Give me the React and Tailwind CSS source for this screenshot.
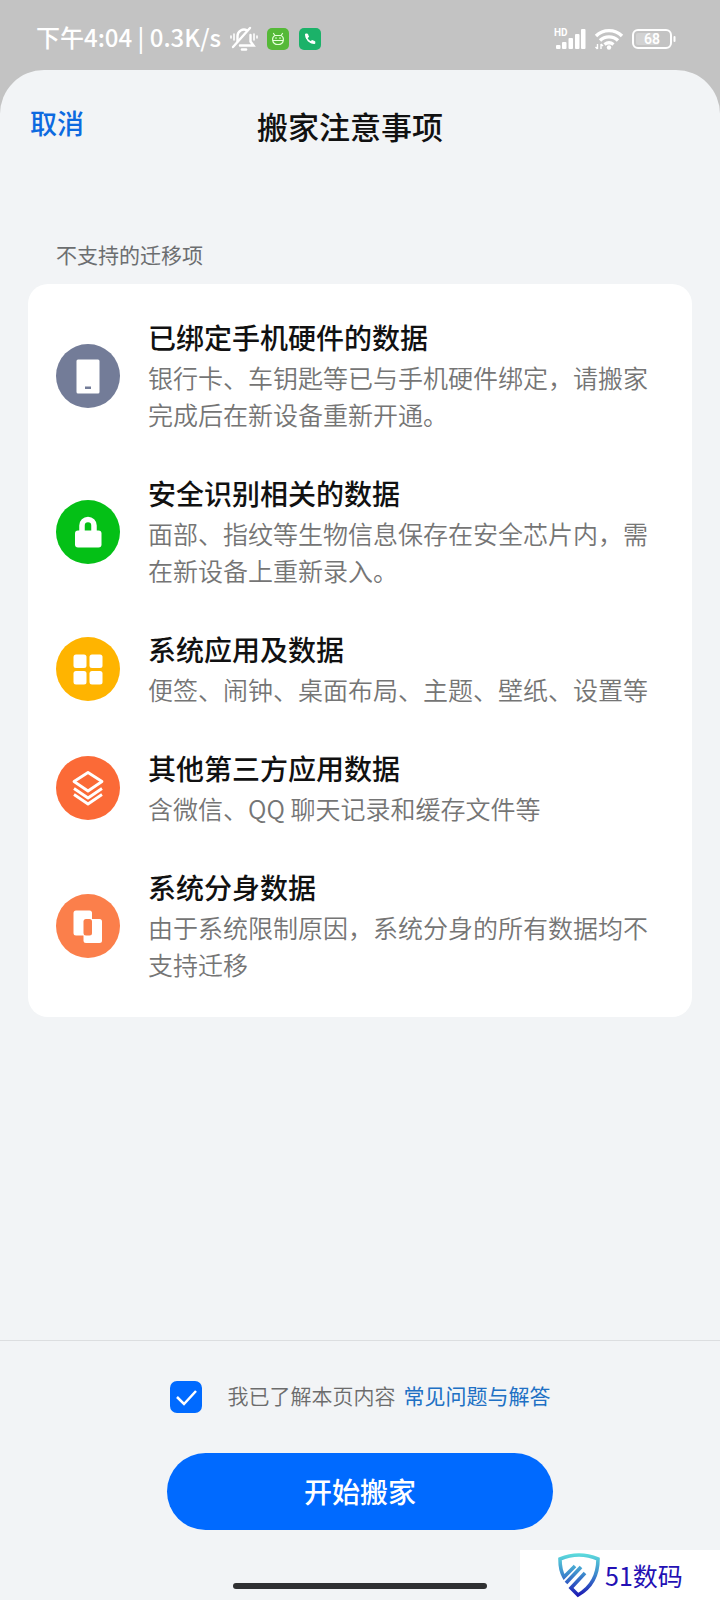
import { useState } from "react";

const ITEMS = [
  {
    icon: PhoneIcon,
    color: "bg-[#737c98]",
    title: "已绑定手机硬件的数据",
    desc: "银行卡、车钥匙等已与手机硬件绑定，请搬家完成后在新设备重新开通。",
  },
  {
    icon: LockIcon,
    color: "bg-[#04c016]",
    title: "安全识别相关的数据",
    desc: "面部、指纹等生物信息保存在安全芯片内，需在新设备上重新录入。",
  },
  {
    icon: GridIcon,
    color: "bg-[#ffb400]",
    title: "系统应用及数据",
    desc: "便签、闹钟、桌面布局、主题、壁纸、设置等",
  },
  {
    icon: LayersIcon,
    color: "bg-[#fb6a37]",
    title: "其他第三方应用数据",
    desc: "含微信、QQ 聊天记录和缓存文件等",
  },
  {
    icon: CloneIcon,
    color: "bg-[#fb7f4b]",
    title: "系统分身数据",
    desc: "由于系统限制原因，系统分身的所有数据均不支持迁移",
  },
];

function PhoneIcon() {
  return (
    <svg viewBox="0 0 64 64" className="size-full">
      <rect x="20.500" y="15.500" width="23" height="34" rx="1.500" fill="#fff" />
      <rect x="29" y="42.500" width="6" height="2.500" fill="#737c98" />
    </svg>
  );
}

function LockIcon() {
  return (
    <svg viewBox="0 0 64 64" className="size-full">
      <path d="M26 33v-7.500a6 6 0 0 1 12 0V33" fill="none" stroke="#fff" strokeWidth="5.500" />
      <rect x="19" y="30.500" width="26.500" height="17" rx="3" fill="#fff" />
    </svg>
  );
}

function GridIcon() {
  return (
    <svg viewBox="0 0 64 64" className="size-full" fill="#fff">
      <rect x="17.500" y="17.500" width="13" height="13.500" rx="2.500" />
      <rect x="33.500" y="17.500" width="13" height="13.500" rx="2.500" />
      <rect x="17.500" y="34" width="13" height="13.500" rx="2.500" />
      <rect x="33.500" y="34" width="13" height="13.500" rx="2.500" />
    </svg>
  );
}

function LayersIcon() {
  return (
    <svg viewBox="0 0 64 64" className="size-full" fill="none" stroke="#fff" strokeWidth="2.800" strokeLinejoin="round">
      <path d="M32 16.500 46 25.500 32 35 18 25.500z" />
      <path d="M18 32.500l14 9.500 14-9.500" />
      <path d="M18 38.500l14 9.500 14-9.500" />
    </svg>
  );
}

function CloneIcon() {
  return (
    <svg viewBox="0 0 64 64" className="size-full">
      <rect x="17.500" y="16.500" width="18.500" height="25" rx="2.500" fill="#fff" />
      <rect x="27.500" y="25" width="18.500" height="24" rx="2.500" fill="#fff" />
      <rect x="27.500" y="25" width="8.500" height="16.500" rx="2.500" fill="#fb7f4b" />
    </svg>
  );
}

function MutedBellIcon() {
  return (
    <svg viewBox="0 0 30 26" className="w-[30px] h-[26px]" fill="none" stroke="#fff" strokeWidth="2.400" strokeLinecap="round">
      <path d="M8.500 15V10a6.500 6.500 0 0 1 9.500-5.700M21.500 9v6.500l3 4H11" />
      <path d="M4 21 21 2" />
      <path d="M13 23.500h4" strokeWidth="2.600" />
      <path d="M5 8v6M2 10v2M25 8v6M28 10v2" strokeWidth="1.600" />
    </svg>
  );
}

function StatusBar() {
  return (
    <div className="flex h-[70px] items-center pl-9 pr-11 pt-2 text-white">
      <span className="pb-1 text-2xl leading-8 font-medium whitespace-pre">下午4:04 | 0.3K/s</span>
      <span className="ml-2">
        <MutedBellIcon />
      </span>
      <svg viewBox="0 0 22 22" className="ml-2 size-[22px]">
        <rect width="22" height="22" rx="5" fill="#55b938" />
        <g fill="none" stroke="#e4ffd8" strokeWidth="1.200" strokeLinecap="round">
          <path d="M6.500 5.500 8 7.500h6l1.500-2M8 7.500C4.500 9 4.500 16.500 11 16.500S17.500 9 14 7.500M6 12.500h10M8.500 10h1M12.500 10h1" />
        </g>
      </svg>
      <svg viewBox="0 0 22 22" className="ml-2.5 size-[22px]">
        <rect width="22" height="22" rx="5" fill="#1bb269" />
        <path d="M7 6.500c0 5 3.500 8.500 8.500 8.500" fill="none" stroke="#fff" strokeWidth="1.600" />
        <path d="M6.500 6 8.500 6l1 3-2 1.500zM15.800 15.500v-2l-3-1-1.300 2z" fill="#fff" stroke="#fff" strokeLinejoin="round" />
      </svg>

      <div className="ml-auto flex items-center gap-2">
        <svg viewBox="0 0 32 22" className="w-8 h-[22px]" fill="#fff">
          <text x="0" y="8" fontSize="10" fontWeight="700" fontFamily="Roboto, sans-serif">HD</text>
          <rect x="2" y="17" width="4.500" height="4" rx="1" />
          <rect x="8" y="14" width="4.500" height="7" rx="1" />
          <rect x="14.500" y="10" width="4.500" height="11" rx="1" />
          <rect x="21" y="6" width="4.500" height="15" rx="1" />
          <rect x="27" y="1" width="4.500" height="20" rx="1" />
        </svg>
        <svg viewBox="0 0 30 22" className="w-[30px] h-[22px]" fill="none" stroke="#fff" strokeWidth="3.400">
          <path d="M2 8a18.500 18.500 0 0 1 26 0" />
          <path d="M6 12.500a13 13 0 0 1 18 0" />
          <path d="M10.500 16.500a7.500 7.500 0 0 1 9 0" />
          <circle cx="15" cy="19.500" r="2.200" fill="#fff" stroke="none" />
          <path d="M3.500 16v5M7 16v5M1.500 19l2 2M7 16l2 2" strokeWidth="1.400" />
        </svg>
        <svg viewBox="0 0 44 20" className="w-11 h-5">
          <rect x="1" y="1" width="38" height="18" rx="5" fill="none" stroke="#fff" strokeWidth="2" />
          <rect x="4" y="4" width="23" height="12" rx="2" fill="#fff" fillOpacity="0.25" />
          <rect x="41.500" y="7" width="2" height="6" rx="1" fill="#fff" />
          <text x="20" y="15" fontSize="14" fontWeight="600" textAnchor="middle" fill="#fff" fontFamily="Roboto, sans-serif">68</text>
        </svg>
      </div>
    </div>
  );
}

function Item({ icon: Icon, color, title, desc }) {
  return (
    <li className="flex items-center gap-7">
      <span className={`size-16 shrink-0 rounded-full ${color}`}>
        <Icon />
      </span>
      <div className="min-w-0">
        <h3 className="mb-[3px] text-[28px] leading-[38px] font-medium text-[#111]">{title}</h3>
        <p className="text-[25px] leading-[37px] font-[350] text-[#757575]">{desc}</p>
      </div>
    </li>
  );
}

function Watermark() {
  return (
    <div className="absolute right-0 bottom-0 flex h-[50px] w-[200px] items-center gap-1 bg-white pl-[37px]">
      <svg viewBox="0 0 44 46" className="w-11 h-[46px] shrink-0" fill="none" stroke="url(#shield)" strokeWidth="3.600">
        <defs>
          <linearGradient id="shield" gradientUnits="userSpaceOnUse" x1="0" y1="2" x2="0" y2="44">
            <stop offset="0" stopColor="#5cdbdc" />
            <stop offset="0.5" stopColor="#3c86cc" />
            <stop offset="1" stopColor="#1c18b4" />
          </linearGradient>
        </defs>
        <path d="M18 14 7 25C4 20 3 14 3 7c12-5 26-5 38 0 0 16-6 28-20 36l-7-7 14-15" />
        <path d="M24 15 9 31" />
      </svg>
      <span className="text-[25px] leading-8 text-[#2310b4]">51数码</span>
    </div>
  );
}

export default function App() {
  const [agreed, setAgreed] = useState(true);

  return (
    <div className="relative flex min-h-screen flex-col bg-[#c3c3c3] font-['Noto_Sans_CJK_SC',sans-serif]">
      <StatusBar />

      <div className="flex flex-1 flex-col rounded-t-[44px] bg-[#f2f4f6]">
        <header className="grid grid-cols-[1fr_auto_1fr] items-center pt-8 pl-[30px] pr-[50px]">
          <button className="justify-self-start pb-1.5 text-[27px] leading-10 font-medium text-[#0d6ae0]">取消</button>
          <h1 className="text-[31px] leading-12 font-medium text-[#111]">搬家注意事项</h1>
        </header>

        <main className="px-7 pt-[88px]">
          <h2 className="pl-7 text-[21px] leading-8 text-[#6c6e70]">不支持的迁移项</h2>
          <ul className="mt-3.5 flex flex-col gap-[41px] rounded-[20px] bg-white px-7 py-[34px]">
            {ITEMS.map((item) => (
              <Item key={item.title} {...item} />
            ))}
          </ul>
        </main>

        <footer className="mt-auto flex flex-col items-center border-t border-[#dcdee0] pt-[38px] pb-[11px]">
          <div className="flex items-center text-[21px] leading-8">
            <span className="relative mr-[26px] size-8">
              <input
                id="agree"
                type="checkbox"
                checked={agreed}
                onChange={(e) => setAgreed(e.target.checked)}
                className="peer block size-8 appearance-none rounded-[7px] border-2 border-[#b8bcc2] checked:border-[#006aff] checked:bg-[#006aff]"
              />
              <svg
                viewBox="0 0 32 32"
                className="pointer-events-none absolute inset-0 hidden peer-checked:block"
                fill="none"
                stroke="#fff"
                strokeWidth="2.500"
              >
                <path d="m7 16 7 7L26 10" />
              </svg>
            </span>
            <label htmlFor="agree" className="mr-2 pb-1 font-[350] text-[#6c6c6c]">我已了解本页内容</label>
            <a href="#faq" className="pb-1 text-[#2070c4]">常见问题与解答</a>
          </div>
          <button className="mt-[38px] h-[77px] w-[386px] rounded-full bg-[#006aff] pb-0.5 text-[28px] font-medium text-white">
            开始搬家
          </button>
          <div className="mt-[53px] h-1.5 w-[254px] rounded-full bg-[#2f3032]" />
        </footer>
      </div>

      <Watermark />
    </div>
  );
}
